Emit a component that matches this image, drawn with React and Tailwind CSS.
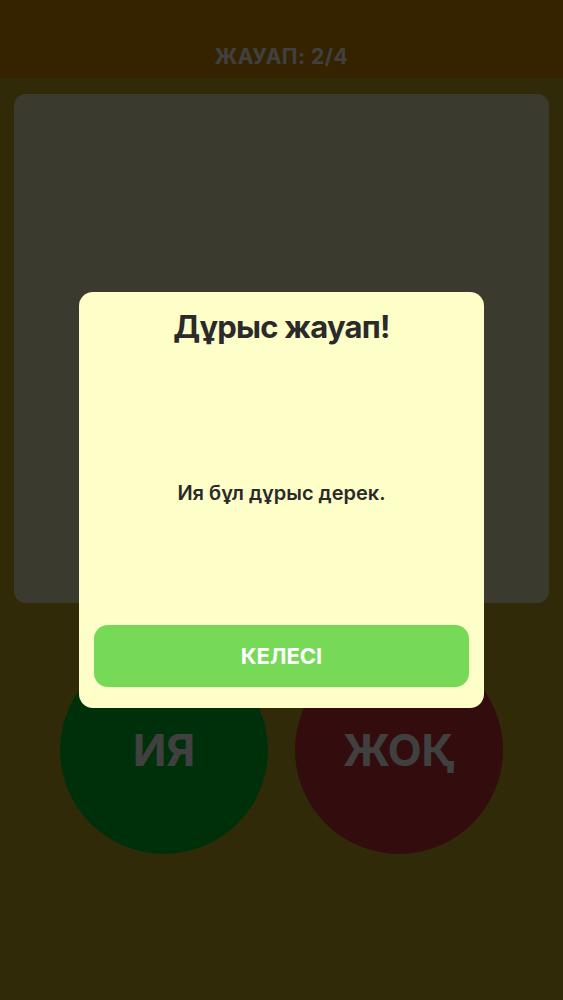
import React, { useState } from 'react';

function App() {
    const [showModal, setShowModal] = useState(true);

    return (
        <div className="relative min-h-[1000px] bg-[#bfa820] font-['Inter','Noto_Sans',sans-serif]">
            <header className="h-[78px] bg-[#d48c00] flex items-end justify-center pb-[6px]">
                <h1 className="text-[21px] font-bold text-white tracking-wide">ЖАУАП: 2/4</h1>
            </header>

            <div className="px-[14px] pt-4">
                <div className="h-[509px] rounded-xl bg-[#e8e8bc]"></div>
            </div>

            <div className="flex justify-center gap-[27px] mt-[43px]">
                <button className="w-[208px] h-[208px] rounded-full bg-[#00c028] flex items-center justify-center text-[44px] font-bold text-white">
                    ИЯ
                </button>
                <button className="w-[208px] h-[208px] rounded-full bg-[#cc3038] flex items-center justify-center text-[44px] font-bold text-white">
                    ЖОҚ
                </button>
            </div>

            {showModal && (
                <div className="fixed inset-0 bg-black/75 flex items-center justify-center">
                    <div className="w-[405px] h-[416px] rounded-[14px] bg-[#fefec9] flex flex-col px-[15px] pt-[12px] pb-[21px]">
                        <h2 className="text-center text-[31px] font-bold text-[#2a2a2a] tracking-tight">Дұрыс жауап!</h2>
                        <p className="flex-1 flex items-center justify-center text-[20px] font-semibold text-[#2a2a2a] pt-[10px]">
                            Ия бұл дұрыс дерек.
                        </p>
                        <button
                            className="h-[62px] rounded-[14px] bg-[#76d957] text-white text-[22px] font-bold"
                            onClick={() => setShowModal(false)}
                        >
                            КЕЛЕСІ
                        </button>
                    </div>
                </div>
            )}
        </div>
    );
}

export default App;
